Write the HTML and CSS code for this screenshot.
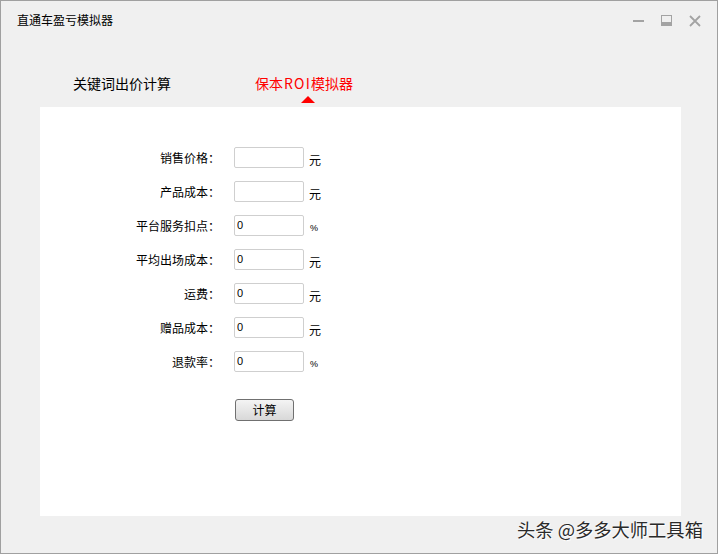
FILE: index.html
```html
<!DOCTYPE html>
<html lang="zh-CN">
<head>
<meta charset="utf-8">
<title>直通车盈亏模拟器</title>
<link rel="stylesheet" href="styles.css">
</head>
<body>
<div class="window">
  <div class="titlebar">
    <span class="title">直通车盈亏模拟器</span>
    <div class="controls">
      <svg class="ctl" width="12" height="12" viewBox="0 0 12 12"><rect x="0" y="5" width="11" height="2" fill="#a3a3a3"/></svg>
      <svg class="ctl" width="12" height="12" viewBox="0 0 12 12"><rect x="0.5" y="0.5" width="10" height="10" fill="none" stroke="#a3a3a3"/><rect x="0" y="7" width="11" height="4" fill="#a3a3a3"/></svg>
      <svg class="ctl" width="12" height="12" viewBox="0 0 12 12"><path d="M1 1 L11 11 M11 1 L1 11" stroke="#a3a3a3" stroke-width="1.8"/></svg>
    </div>
  </div>
  <div class="tabs">
    <span class="tab">关键词出价计算</span>
    <span class="tab active">保本<span class="latin">ROI</span>模拟器<i class="caret"></i></span>
  </div>
  <div class="panel">
    <div class="form">
      <label class="label">销售价格：</label><input class="field" type="text" value=""><span class="unit">元</span>
      <label class="label">产品成本：</label><input class="field" type="text" value=""><span class="unit">元</span>
      <label class="label">平台服务扣点：</label><input class="field" type="text" value="0"><span class="unit pct">%</span>
      <label class="label">平均出场成本：</label><input class="field" type="text" value="0"><span class="unit">元</span>
      <label class="label">运费：</label><input class="field" type="text" value="0"><span class="unit">元</span>
      <label class="label">赠品成本：</label><input class="field" type="text" value="0"><span class="unit">元</span>
      <label class="label">退款率：</label><input class="field" type="text" value="0"><span class="unit pct">%</span>
    </div>
    <button class="btn" type="button">计算</button>
  </div>
  <div class="watermark">头条 @多多大师工具箱</div>
</div>
</body>
</html>
```
FILE: styles.css
```css
* { box-sizing: border-box; }
html, body { margin: 0; padding: 0; }
body {
  font-family: "Noto Sans CJK SC", "Liberation Sans", sans-serif;
  color: #000;
  background: #f0f0f0;
}
.window {
  position: relative;
  width: 718px;
  height: 554px;
  border: 1px solid #a0a0a0;
  background: #f0f0f0;
  overflow: hidden;
}
.titlebar {
  height: 36px;
  display: flex;
  align-items: center;
  padding-left: 16px;
  padding-right: 16px;
}
.title {
  font-size: 12px;
  line-height: 36px;
  padding-top: 1px;
}
.controls {
  margin-left: auto;
  display: flex;
  gap: 16px;
  padding-top: 4px;
}
.ctl { display: block; }
.tabs {
  height: 70px;
  display: flex;
  align-items: flex-end;
  padding-left: 72px;
  padding-bottom: 14px;
}
.tab {
  font-size: 14px;
  line-height: 20px;
  white-space: nowrap;
}
.tab.active {
  position: relative;
  color: #ff0000;
  margin-left: 84px;
}
.latin { letter-spacing: 1.2px; padding-left: 1px; }
.caret {
  position: absolute;
  left: 46px;
  top: 23px;
  width: 0;
  height: 0;
  border-left: 7px solid transparent;
  border-right: 7px solid transparent;
  border-bottom: 7px solid #ff0000;
}
.panel {
  margin-left: 39px;
  width: 641px;
  height: 409px;
  background: #fff;
  padding-top: 40px;
  padding-left: 80px;
}
.form {
  display: grid;
  grid-template-columns: 97px 70px auto;
  grid-auto-rows: 21px;
  column-gap: 17px;
  row-gap: 13px;
  align-items: center;
}
.form .unit { margin-left: -12px; }
.label {
  font-size: 12px;
  text-align: right;
  white-space: nowrap;
  line-height: 21px;
  margin-right: -3px;
}
.field {
  width: 70px;
  height: 21px;
  border: 1px solid #cfcfcf;
  border-radius: 2px;
  background: #fff;
  font-family: "Liberation Sans", sans-serif;
  font-size: 11px;
  padding: 0 0 2px 2px;
  margin: 0;
  outline: none;
  color: #000;
}
.unit {
  font-size: 12px;
  padding-top: 4px;
  line-height: 17px;
}
.unit.pct {
  font-family: "Liberation Sans", sans-serif;
  font-size: 9px;
  padding-top: 6px;
  line-height: 15px;
  padding-left: 1px;
}
.btn {
  display: block;
  margin-top: 27px;
  margin-left: 115px;
  width: 59px;
  height: 22px;
  border: 1px solid #707070;
  border-radius: 3px;
  background: linear-gradient(#f4f4f4, #e6e6e6 50%, #d8d8d8);
  font-family: "Noto Sans CJK SC", sans-serif;
  font-size: 12px;
  line-height: 18px;
  padding: 0;
  color: #000;
}
.watermark {
  position: absolute;
  left: 516px;
  top: 515px;
  font-size: 18.3px;
  line-height: 26px;
  color: #2a2a2a;
  white-space: nowrap;
  text-shadow: 0 0 2px #fff, 1px 1px 1px #fff;
}
```
